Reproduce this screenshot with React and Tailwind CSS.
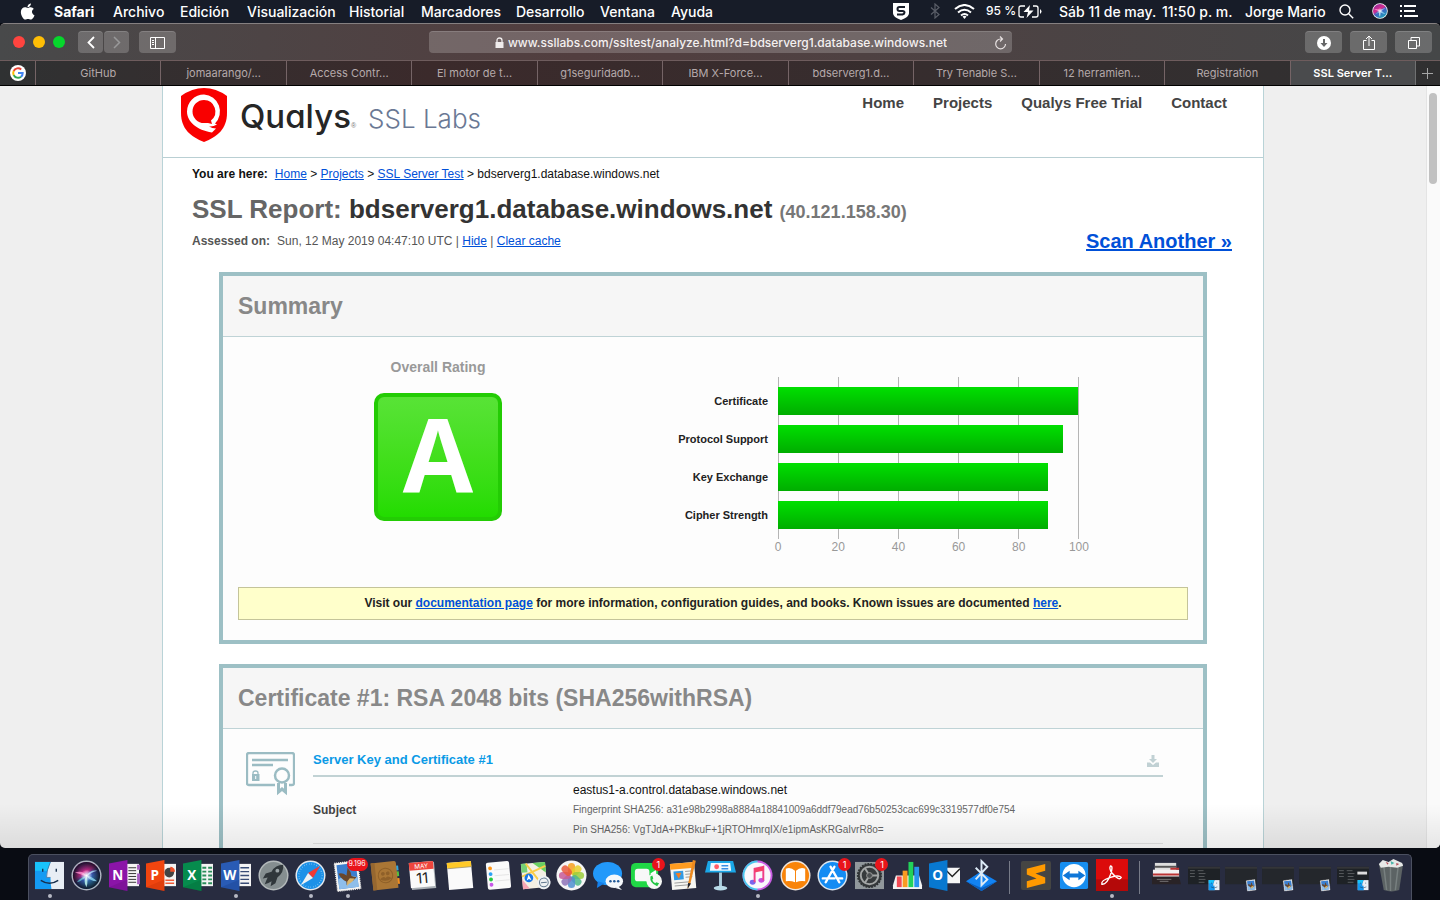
import React from "react";

const menus = [
  ["Archivo", "w-[67px]"],
  ["Edición", "w-[67px]"],
  ["Visualización", "w-[102px]"],
  ["Historial", "w-[72px]"],
  ["Marcadores", "w-[95px]"],
  ["Desarrollo", "w-[84px]"],
  ["Ventana", "w-[71px]"],
  ["Ayuda", "w-[60px]"],
];

const tabs = [
  "GitHub",
  "jomaarango/...",
  "Access Contr...",
  "El motor de t...",
  "g1seguridadb...",
  "IBM X-Force...",
  "bdserverg1.d...",
  "Try Tenable S...",
  "12 herramien...",
  "Registration",
  "SSL Server T...",
];

const ratings = [
  ["Certificate", 100],
  ["Protocol Support", 95],
  ["Key Exchange", 90],
  ["Cipher Strength", 90],
];

function MenuBar() {
  return (
    <header className="flex h-[23px] shrink-0 items-center justify-between bg-[#171c28] pb-[1px] font-['Inter',sans-serif] text-[14px] font-medium whitespace-nowrap text-white">
      <nav className="flex items-center pl-[20px]" aria-label="Menu">
        <svg className="mr-[19px] h-[17px] w-[15px]" viewBox="0 0 384 480" fill="#fff">
          <path d="M319 251c0-37 16-64 50-84-19-27-47-42-85-45-35-3-74 21-88 21-15 0-49-20-76-20C64 124 4 168 4 257c0 27 5 54 15 82 13 38 60 131 110 129 26-1 44-18 78-18 33 0 50 18 79 18 50-1 93-85 105-122-67-32-72-93-72-95zM262 88c28-33 25-64 24-75-24 1-53 17-69 36-18 21-29 46-27 74 27 2 51-11 72-35z" />
        </svg>
        <button className="w-[59px] text-left font-bold">Safari</button>
        {menus.map(([label, width]) => (
          <button key={label} className={`${width} text-left`}>{label}</button>
        ))}
      </nav>
      <div className="flex items-center pr-[22px]">
        <svg className="mr-[21px] h-[17px] w-[16px]" viewBox="0 0 16 17">
          <path d="M0 0h16v10c0 3-3 5-8 7-5-2-8-4-8-7z" fill="#fff" />
          <path d="M12 4H6.500Q4.500 4 4.500 6T6.500 8H9.500Q11.500 8 11.500 9.500T9.500 11.500H4" fill="none" stroke="#171c28" strokeWidth="2" />
        </svg>
        <svg className="mr-[14px] h-[16px] w-[10px]" viewBox="0 0 10 16" fill="none" stroke="#5a5e68" strokeWidth="1.2">
          <path d="M1 4.500 9 11.500 5 15V1l4 3.500-8 7" />
        </svg>
        <svg className="mr-[11px] h-[15px] w-[21px]" viewBox="0 0 21 15" fill="none" stroke="#fff" strokeWidth="2">
          <path d="M1 5Q10.500-3 20 5M4 8.500Q10.500 3 17 8.500M7 11.500Q10.500 8.500 14 11.500" />
          <path d="M8.500 12.500Q10.500 11 12.500 12.500L10.500 15z" fill="#fff" stroke="none" />
        </svg>
        <span className="w-[32px] text-[12px]">95 %</span>
        <svg className="mr-[17px] h-[13px] w-[24px]" viewBox="0 0 24 13" fill="none" stroke="#fff" strokeWidth="1.300">
          <path d="M7 1H3Q1 1 1 3v7q0 2 2 2h3M15 1h3q2 0 2 2v7q0 2-2 2h-4" />
          <path d="M12 0 5.500 7H10L8.500 13 15.500 5.500H11z" fill="#fff" stroke="none" />
          <path d="M22 4Q25 6.500 22 9z" fill="#fff" stroke="none" />
        </svg>
        <time className="flex">
          <span className="w-[103px]">Sáb 11 de may.</span>
          <span className="w-[83px]">11:50 p. m.</span>
        </time>
        <span className="w-[94px]">Jorge Mario</span>
        <svg className="mr-[18px] h-[15px] w-[15px]" viewBox="0 0 15 15" fill="none" stroke="#fff" strokeWidth="1.400">
          <circle cx="6" cy="6" r="5" />
          <path d="m9.700 9.700 4.500 4.500" />
        </svg>
        <SiriOrb className="mr-[12px] h-[16px] w-[16px]" light />
        <svg className="h-[12px] w-[18px]" viewBox="0 0 18 12" fill="#fff">
          <path d="M0 0h2v2H0zM4 0h12v2H4zM0 5h2v2H0zM4 5h11v2H4zM0 10h2v2H0zM4 10h14v2H4z" />
        </svg>
      </div>
    </header>
  );
}

function SiriOrb({ className, light }) {
  return (
    <svg className={className} viewBox="0 0 32 32">
      <defs>
        <linearGradient id="siri" x1="0.2" y1="0" x2=".8" y2="1">
          <stop offset="0" stopColor="#8b2a9c" />
          <stop offset=".38" stopColor="#d82c8e" />
          <stop offset=".55" stopColor="#3c62c4" />
          <stop offset="1" stopColor="#1fa9b4" />
        </linearGradient>
        <radialGradient id="siriShade">
          <stop offset=".3" stopColor="#161325" stopOpacity="0" />
          <stop offset="1" stopColor="#100e20" stopOpacity=".95" />
        </radialGradient>
        <radialGradient id="siriGlow">
          <stop offset="0" stopColor="#ffffff" />
          <stop offset="1" stopColor="#ffffff" stopOpacity="0" />
        </radialGradient>
      </defs>
      <circle cx="16" cy="16" r="15.500" fill={light ? "#fff" : "#aeb3bf"} />
      <circle cx="16" cy="16" r="14" fill="url(#siri)" />
      {!light && <circle cx="16" cy="16" r="14" fill="url(#siriShade)" />}
      <path d="M4 13Q13 10 16 17 11 15 4 13z" fill="#ff8fd0" opacity=".8" />
      <path d="M16 17Q19 10 27 11 20 13 16 17z" fill="#a8e6ff" opacity=".8" />
      <path d="M16 16Q22 17 27 22 19 22 16 16z" fill="#8fd8f4" opacity=".8" />
      <path d="M16 16Q18 22 16 28 12 22 16 16z" fill="#c8fff2" opacity=".8" />
      <path d="M16 16Q13 21 6 23 10 18 16 16z" fill="#69d9d8" opacity=".7" />
      <circle cx="16" cy="16" r="6" fill="url(#siriGlow)" />
    </svg>
  );
}

const toolButton = "flex h-[22px] items-center justify-center rounded-[4px] border-t border-white/15 bg-white/20";

function Toolbar() {
  return (
    <div className="grid h-[36px] grid-cols-[1fr_minmax(0,583px)_1fr] items-center bg-linear-to-r from-[#48494a] via-[#523e3f] via-40% to-[#454748] px-[8px]">
      <div className="flex items-center pl-[5px]">
        <button aria-label="Close" className="mr-[8px] h-[12px] w-[12px] rounded-full bg-[#ff443f]" />
        <button aria-label="Minimize" className="mr-[8px] h-[12px] w-[12px] rounded-full bg-[#ffbe05]" />
        <button aria-label="Full screen" className="mr-[13px] h-[12px] w-[12px] rounded-full bg-[#06d72c]" />
        <button aria-label="Back" className={`${toolButton} mr-[1px] w-[25px]`}>
          <svg className="h-[13px] w-[8px]" viewBox="0 0 8 13" fill="none" stroke="#fff" strokeWidth="1.800"><path d="M7 1 1.500 6.500 7 12" /></svg>
        </button>
        <button aria-label="Forward" className={`${toolButton} mr-[10px] w-[25px]`}>
          <svg className="h-[13px] w-[8px]" viewBox="0 0 8 13" fill="none" stroke="#99999a" strokeWidth="1.500"><path d="M1 1 6.500 6.500 1 12" /></svg>
        </button>
        <button aria-label="Sidebar" className={`${toolButton} w-[37px]`}>
          <svg className="h-[12px] w-[15px]" viewBox="0 0 15 12" fill="none" stroke="#fff"><path d="M.5.5h14v11H.5zM5.500.5v11M2 3.500h2M2 5.500h2M2 7.500h2" /></svg>
        </button>
      </div>
      <div className="flex h-[22px] items-center rounded-[4px] border-t border-white/15 bg-white/20 pl-[20px] pr-[5px]">
        <div className="flex min-w-0 flex-1 items-center justify-center gap-[4px]">
          <svg className="h-[11px] w-[9px] shrink-0" viewBox="0 0 9 11" fill="#f0ecec"><path d="M.5 5h8v6h-8z" /><path d="M2 5.500V3.500Q2 1 4.500 1T7 3.500v2" fill="none" stroke="#f0ecec" strokeWidth="1.300" /></svg>
          <input aria-label="Address" className="[field-sizing:content] min-w-0 bg-transparent font-['Inter',sans-serif] text-[12px] font-medium text-[#f4f0f0] outline-none" defaultValue="www.ssllabs.com/ssltest/analyze.html?d=bdserverg1.database.windows.net" />
        </div>
        <button aria-label="Reload">
          <svg className="h-[14px] w-[13px]" viewBox="0 0 13 14" fill="none" stroke="#e6e0e0" strokeWidth="1.200"><path d="M8 3H6.500A4.900 4.900 0 1 0 11.500 8M6 .5 8.500 3 6 5.500" /></svg>
        </button>
      </div>
      <div className="flex justify-end gap-[8px]">
        <button aria-label="Downloads" className={`${toolButton} w-[37px]`}>
          <svg className="h-[14px] w-[14px]" viewBox="0 0 14 14"><circle cx="7" cy="7" r="7" fill="#fff" /><path d="M6 3h2v4h2.500L7 11 3.500 7H6z" fill="#666768" /></svg>
        </button>
        <button aria-label="Share" className={`${toolButton} w-[37px]`}>
          <svg className="h-[16px] w-[12px]" viewBox="0 0 12 16" fill="none" stroke="#fff"><path d="M3.500 5.500H.5v9h11v-9h-3M6 11V1M3 4l3-3 3 3" /></svg>
        </button>
        <button aria-label="Show tabs" className={`${toolButton} w-[37px]`}>
          <svg className="h-[12px] w-[12px]" viewBox="0 0 12 12" fill="none" stroke="#fff"><path d="M.5 3.500h8v8h-8zM3 3V.5h8.500V9H9" /></svg>
        </button>
      </div>
    </div>
  );
}

function TabStrip() {
  return (
    <div className="flex h-[26px] border-t border-b border-t-[#6e5c5d] border-b-black bg-linear-to-r from-[#2f3132] via-[#3b2a2b] via-30% to-[#303031] font-['Inter',sans-serif] text-[11px]">
      <button aria-label="Google" className="flex w-[35px] items-center justify-center">
        <svg className="h-[16px] w-[16px]" viewBox="0 0 16 16" fill="none" strokeWidth="2">
          <circle cx="8" cy="8" r="8" fill="#fff" />
          <path d="M11.200 4.500A4.800 4.800 0 0 0 3.700 6" stroke="#ea4335" />
          <path d="M3.700 5.900a4.800 4.800 0 0 0 0 4.300" stroke="#fbbc05" />
          <path d="M3.700 10.100a4.800 4.800 0 0 0 7.300 1.600" stroke="#34a853" />
          <path d="M11 11.700A4.600 4.600 0 0 0 12.700 8H8" stroke="#4285f4" />
        </svg>
      </button>
      {tabs.map((tab, index) => (
        <button
          key={tab}
          className={`min-w-0 flex-1 truncate border-l border-[#756466] ${index === tabs.length - 1 ? "bg-[#4a4b4d] font-semibold text-white" : "text-[#b5a9aa]"}`}
        >
          {tab}
        </button>
      ))}
      <button aria-label="New tab" className="flex w-[25px] items-center justify-center border-l border-[#707172]">
        <svg className="h-[11px] w-[11px]" viewBox="0 0 11 11" stroke="#a5a5a6"><path d="M5.500 0v11M0 5.500h11" /></svg>
      </button>
    </div>
  );
}

function SiteHeader() {
  return (
    <header className="flex h-[72px] justify-between border-b border-[#b9cfd3] pl-[18px] pr-[36px]">
      <a href="#home" className="flex pt-[2px]">
        <svg className="h-[54px] w-[46px]" viewBox="0 0 46 54">
          <path d="M0 8Q11 0 23 0T46 8V25C46 41 36 49 23 54 10 49 0 41 0 25z" fill="#f90000" />
          <path d="M23 6.500A17 17 0 0 0 6 23.500C6 34 16 42 31 44.500L35 40.500Q31 40.500 28 38.500 32 39 36 36.500L34 35.500A17 17 0 0 0 23 6.500z" fill="#fff" />
          <path d="M23 12A11.500 11.500 0 0 0 11.500 23.500 11.500 11.500 0 0 0 23 35H27L31 36 30 32.500A11.500 11.500 0 0 0 23 12z" fill="#f90000" />
        </svg>
        <span className="ml-[13px] flex items-baseline">
          <span className="font-['Inter',sans-serif] text-[33px] leading-[56px] font-medium text-[#262626] [font-feature-settings:'cv11']">Qualys</span>
          <span className="text-[7px] text-[#777]">®</span>
          <span className="ml-[12px] font-['Inter',sans-serif] text-[26px] font-light text-[#6a7894]">SSL Labs</span>
        </span>
      </a>
      <nav className="flex gap-[29px] pt-[7px] text-[15px] leading-[20px] font-bold text-[#444]" aria-label="Site">
        <a href="#home">Home</a>
        <a href="#projects">Projects</a>
        <a href="#trial">Qualys Free Trial</a>
        <a href="#contact">Contact</a>
      </nav>
    </header>
  );
}

const link = "text-[#0050d8] underline";

function Card({ title, className, children }) {
  return (
    <section className={`mx-[56px] border-4 border-[#9dc0c5] bg-[#fdfdfd] ${className}`}>
      <h2 className="h-[61px] border-b border-[#bfd3d6] bg-[#f6f6f6] pl-[15px] text-[23px] leading-[60px] font-bold text-[#888]">{title}</h2>
      {children}
    </section>
  );
}

function Summary() {
  return (
    <Card title="Summary" className="mt-[23px]">
      <div className="flex pt-[20px]">
        <div className="flex w-[430px] flex-col items-center">
          <h3 className="text-[14px] leading-[20px] font-bold text-[#999]">Overall Rating</h3>
          <div className="mt-[16px] flex h-[128px] w-[128px] items-start justify-center rounded-[10px] border-4 border-[#23cc04] bg-linear-to-b from-[#58e336] via-[#42df1c] via-50% to-[#22dc00] font-['Open_Sans',sans-serif] text-[102px] leading-[112px] font-bold text-white">
            A
          </div>
        </div>
        <div className="pt-[30px]">
          {ratings.map(([label]) => (
            <div key={label} className="mb-[10px] w-[115px] text-right text-[11px] leading-[28px] font-bold text-[#222]">{label}</div>
          ))}
        </div>
        <div className="ml-[10px] pt-[20px]">
          <div className="relative w-[301px] pt-[10px]">
            <div className="absolute inset-0 grid grid-cols-5 border-r border-[#b5b5b5]">
              {[0, 1, 2, 3, 4].map((n) => <div key={n} className="border-l border-[#b5b5b5]" />)}
            </div>
            <div className="relative mr-[1px] pb-[2px]">
              {ratings.map(([label, value]) => (
                <div key={label} className="mb-[10px] h-[28px] bg-linear-to-b from-[#00e000] to-[#00ad00] last:mb-[8px]" style={{ width: `${value}%` }} />
              ))}
            </div>
          </div>
          <div className="-mx-[30px] grid grid-cols-6 text-center text-[12px] leading-[16px] text-[#999]">
            {[0, 20, 40, 60, 80, 100].map((n) => <span key={n}>{n}</span>)}
          </div>
        </div>
      </div>
      <p className="mx-[15px] mt-[32px] mb-[20px] border border-[#c4c49a] bg-[#ffffcb] text-center text-[12px] leading-[31px] font-bold text-[#222]">
        Visit our <a href="#docs" className={link}>documentation page</a> for more information, configuration guides, and books. Known issues are documented <a href="#issues" className={link}>here</a>.
      </p>
    </Card>
  );
}

function Certificate() {
  return (
    <Card title="Certificate #1: RSA 2048 bits (SHA256withRSA)" className="mt-[20px]">
      <div className="flex pt-[21px] pr-[40px] pb-[40px] pl-[23px]">
        <svg className="mt-[2px] mr-[18px] h-[44px] w-[49px] shrink-0" viewBox="0 0 49 44" fill="none" stroke="#9bbcc3" strokeWidth="2.300">
          <path d="M29 33H3q-2 0-2-2V3q0-2 2-2h43q2 0 2 2v28q0 2-2 2h-3" />
          <path d="M6 8h36M6 13h21" strokeWidth="2.500" />
          <path d="M7 22.500V21q0-2 2.500-2T12 21v1.500" strokeWidth="1.300" />
          <path d="M6 22h7.500v7H6z" fill="#9bbcc3" stroke="none" />
          <path d="M9.700 24v3" stroke="#fff" strokeWidth="1" />
          <circle cx="36" cy="23.500" r="7" strokeWidth="2.500" />
          <path d="M32.500 31v9l3.500-3 3.500 3V31" strokeWidth="3" />
        </svg>
        <div className="min-w-0 flex-1">
          <div className="flex h-[27px] justify-between border-b-2 border-[#c1d2d4] pr-[4px] text-[13px] leading-[20px] font-bold text-[#0a9ae6]">
            <h3>Server Key and Certificate #1</h3>
            <a href="#download" aria-label="Download certificate" className="pt-[5px]">
              <svg className="h-[12px] w-[12px]" viewBox="0 0 12 12" fill="#c1d1d4"><path d="M4.500 0h3v4h2.500L6 8 2 4h2.500zM0 7.500h3L6 10l3-2.500h3V12H0z" /></svg>
            </a>
          </div>
          <table className="mt-[3px] w-full text-left">
            <tbody>
              <tr className="border-b border-[#e3e3e3]">
                <th scope="row" className="w-[260px] pb-[3px] text-[12px] text-[#444]">Subject</th>
                <td className="pb-[3px] text-[10px] leading-[20px] text-[#666]">
                  <div className="text-[12px] text-[#111]">eastus1-a.control.database.windows.net</div>
                  <div>Fingerprint SHA256: a31e98b2998a8884a18841009a6ddf79ead76b50253cac699c3319577df0e754</div>
                  <div>Pin SHA256: VgTJdA+PKBkuF+1jRTOHmrqIX/e1ipmAsKRGaIvrR8o=</div>
                </td>
              </tr>
            </tbody>
          </table>
        </div>
      </div>
    </Card>
  );
}

function Page() {
  return (
    <div className="relative flex min-h-0 flex-1 overflow-hidden rounded-b-[5px] bg-[#efefef] font-['Liberation_Sans',Arial,sans-serif]">
      <div className="min-w-0 flex-1 border-r border-[#e4e4e4]">
        <div className="mx-auto max-w-[1102px] border-x border-[#b9d3d7] bg-white">
          <SiteHeader />
          <main>
            <div className="pr-[31px] pl-[29px]">
              <nav className="pt-[8px] text-[12px] leading-[16px] text-[#111]" aria-label="Breadcrumb">
                <b className="mr-[7px]">You are here:</b>
                <a href="#home" className={link}>Home</a> &gt; <a href="#projects" className={link}>Projects</a> &gt; <a href="#test" className={link}>SSL Server Test</a> &gt; bdserverg1.database.windows.net
              </nav>
              <h1 className="mt-[11px] h-[32px] text-[26px] leading-[32px] font-bold text-[#666]">
                SSL Report: <span className="text-[#333]">bdserverg1.database.windows.net</span> <span className="text-[18px] text-[#777]">(40.121.158.30)</span>
              </h1>
              <div className="flex h-[24px] items-center justify-between pt-[8px] text-[12px] text-[#555]">
                <p><b className="mr-[7px]">Assessed on:</b>Sun, 12 May 2019 04:47:10 UTC | <a href="#hide" className={link}>Hide</a> | <a href="#clear" className={link}>Clear cache</a></p>
                <a href="#scan" className="text-[20px] font-bold text-[#0050d8] underline">Scan Another »</a>
              </div>
            </div>
            <Summary />
            <Certificate />
          </main>
        </div>
      </div>
      <div className="w-[13px] bg-[#fafafa] pt-[7px] pl-[2px]">
        <div className="h-[91px] w-[8px] rounded-full bg-[#c1c1c1]" />
      </div>
      <div className="pointer-events-none absolute inset-x-0 bottom-0 h-[44px] bg-linear-to-b from-transparent to-black/8" />
    </div>
  );
}

function OfficeIcon({ letter, color, dark, children }) {
  return (
    <>
      <path d="M15 4h16v23H15z" fill="#f4f4f4" />
      {children}
      <path d="M0 3.500 19 0v32L0 28z" fill={color} />
      <path d="M0 28 19 20v12z" fill={dark} opacity=".2" />
      <text x="9" y="21" textAnchor="middle" fontFamily="Open Sans" fontWeight="700" fontSize="14" fill="#fff">{letter}</text>
    </>
  );
}

function Stamp() {
  return (
    <g transform="rotate(-7 16 16)">
      <path d="M4 2h24v29H4z" fill="#f4f4f2" stroke="#f4f4f2" strokeDasharray="1 1" strokeWidth="1.500" />
      <path d="M6 4h20v25H6z" fill="#3b7fd0" />
      <path d="M6 19q10-6 20 0v10H6z" fill="#8ebeea" />
      <path d="M7 13q4-1 8 3l2-8q3 4 3 9l5 2-4 3-4 1-3 3v-4q-5-3-7-9z" fill="#69472a" />
      <path d="m18 19 5 1-3 3-4 2-2 2 1-5z" fill="#d9b56a" />
    </g>
  );
}

function FinderFace() {
  return (
    <>
      <path d="M1 2h30v28H1z" fill="#e8eef5" />
      <path d="M1 2h16q-4 8-4 16h4q0 6 1 12H1z" fill="#149bf3" />
      <path d="M1 2h16l-3 9H1z" fill="#18c4fb" />
      <path d="M17 2q-4 8-4 16h4" fill="none" stroke="#3e6a94" strokeWidth=".7" />
      <path d="M9 9v3M23 9v3M7 21q9 6 18 0" fill="none" stroke="#17304e" strokeWidth="1.400" />
    </>
  );
}

const petals = ["#f7a01f", "#e8cf2a", "#9bcc3c", "#4fb88a", "#4f8fd0", "#8e73b8", "#c75a96", "#ea5b3c"];

const dockApps = [
  { name: "Finder", running: true, art: <FinderFace /> },
  { name: "Siri", art: "siri" },
  { name: "OneNote", art: <OfficeIcon letter="N" color="#8b14a8" dark="#4a0860"><path d="M20 8h8M20 11h8M20 14h8M20 17h8M20 20h8M20 23h8" stroke="#333" /><path d="M29 5h3v5h-3zM29 14h3v11h-3z" fill="#a55dc0" /></OfficeIcon> },
  { name: "PowerPoint", art: <OfficeIcon letter="P" color="#f0450f" dark="#a02000"><circle cx="24" cy="13" r="5" fill="#444" /><path d="M25 12V7a5 5 0 0 1 5 5z" fill="#f0502b" /><path d="M20 21h9M20 24h9" stroke="#ef5b38" strokeWidth="1.500" /></OfficeIcon> },
  { name: "Excel", art: <OfficeIcon letter="X" color="#068b4d" dark="#004a25"><path d="M20 8h4M26 8h4M20 12h4M26 12h4M20 16h4M26 16h4M20 20h4M26 20h4M20 24h4M26 24h4" stroke="#2b8d5a" strokeWidth="2" /></OfficeIcon> },
  { name: "Word", running: true, art: <OfficeIcon letter="W" color="#295bb5" dark="#102d70"><path d="M20 8h9M20 12h9M20 16h9M20 20h9M20 24h9" stroke="#394c76" strokeWidth="1.500" /></OfficeIcon> },
  { name: "Launchpad", art: <>
    <circle cx="16" cy="16" r="15.500" fill="#b4babb" /><circle cx="16" cy="16" r="14" fill="#858e90" />
    <path d="M26 5q-8 0-12 7l-6 2-3 5 5-1q-2 4-3 7 4-1 7-3l-1 5 5-3 2-6q7-5 6-13z" fill="#30373b" /><circle cx="20" cy="11" r="2" fill="#9ba4a7" />
  </> },
  { name: "Safari", running: true, art: <>
    <circle cx="16" cy="16" r="15.500" fill="#e4e9ee" /><circle cx="16" cy="16" r="14" fill="#1c91e8" />
    <circle cx="16" cy="16" r="12" fill="none" stroke="#bce3fa" strokeWidth="1.500" strokeDasharray=".4 2.200" />
    <path d="M26 6 18.500 18.500 13.500 13.500z" fill="#f03a35" /><path d="M6 26 13.500 13.500 18.500 18.500z" fill="#eef1f3" />
  </> },
  { name: "Mail", running: true, badge: "9.196", art: <Stamp /> },
  { name: "Contacts", art: <g transform="rotate(-6 16 16)"><path d="M26 7h4v5h-4z" fill="#30a6df" /><path d="M26 13h4v5h-4z" fill="#55c13f" /><path d="M26 20h4v6h-4z" fill="#f28e1f" /><path d="M2 2h24q2 0 2 2v26H2z" fill="#aa7635" /><path d="M2 2h4v28H2z" fill="#966730" /><circle cx="16" cy="16" r="7.500" fill="none" stroke="#8f6029" /><circle cx="13.500" cy="14" r="2" fill="#8f6029" /><circle cx="18.500" cy="14" r="2" fill="#8f6029" /><path d="M10 19.500q3.500-4 6-1 2.500-3 6 1-6 4-12 0z" fill="#8f6029" /></g> },
  { name: "Calendar", art: <g transform="rotate(-5 16 16)"><path d="M4 3h25v27H4z" fill="#aab0b5" /><path d="M3 2h25v26H3z" fill="#fafafa" /><path d="M3 2h25v8H3z" fill="#ee453d" /><text x="15.500" y="8.500" textAnchor="middle" fontFamily="Inter" fontSize="6.500" fill="#fff">MAY</text><text x="15.500" y="24" textAnchor="middle" fontFamily="Inter" fontSize="15" fill="#222">11</text></g> },
  { name: "Notes", art: <g transform="rotate(-5 16 16)"><path d="M4 2h25v28H4z" fill="#fafafa" /><path d="M4 2h25v6H4z" fill="#ffc928" /><path d="M4 8h25" stroke="#8e8a75" strokeWidth=".7" /></g> },
  { name: "Reminders", art: <g transform="rotate(-5 16 16)"><rect x="5" y="2" width="24" height="28" rx="2" fill="#fafafa" /><circle cx="9" cy="8" r="2" fill="#ff9618" /><circle cx="9" cy="14" r="2" fill="#2ba2f5" /><circle cx="9" cy="19.500" r="2" fill="#25c940" /><circle cx="9" cy="25" r="2" fill="#c758e8" /><path d="M13 10h15M13 16h15M13 21.500h15" stroke="#ddd" strokeWidth=".7" /></g> },
  { name: "Maps", art: <g transform="rotate(-5 16 16)"><path d="M3 3h25v26H3z" fill="#f3efe3" /><path d="M15 3h13v11z" fill="#69cf60" /><path d="M3 19 10 29H3z" fill="#f7a5b4" /><path d="M3 3h6v9H3z" fill="#76d276" /><path d="m8 3 17 26M3 16 28 7" stroke="#f9cc48" strokeWidth="2" /><circle cx="10" cy="18" r="4.500" fill="#1777e8" /><path d="m10 14.500 2.500 6-2.500-1.500-2.500 1.500z" fill="#fff" /><circle cx="25" cy="24" r="7" fill="#eef1f3" /><circle cx="25" cy="24" r="4.500" fill="none" stroke="#61788e" /><path d="M22 24h6" stroke="#61788e" /></g> },
  { name: "Photos", art: <><circle cx="16" cy="16" r="15.500" fill="#f5f5f5" />{petals.map((color, index) => <rect key={color} x="12.300" y="3" width="7.400" height="12" rx="3.700" fill={color} opacity=".85" transform={`rotate(${index * 45} 16 16)`} />)}</> },
  { name: "Messages", art: <><ellipse cx="15" cy="14" rx="15" ry="12" fill="#2299fa" /><path d="m5 22-1 7 8-5z" fill="#1680eb" /><ellipse cx="22" cy="22" rx="9" ry="7" fill="#f5f8fb" /><path d="m26 27 4 4-7-2z" fill="#f5f8fb" /><circle cx="18" cy="22" r="1.300" fill="#225a99" /><circle cx="22" cy="22" r="1.300" fill="#225a99" /><circle cx="26" cy="22" r="1.300" fill="#225a99" /></> },
  { name: "FaceTime", badge: "1", art: <><rect x="0" y="3" width="28" height="25" rx="5" fill="#20d746" /><rect x="4" y="9" width="15" height="13" rx="3" fill="#f8f8f8" /><path d="m20 14 6-4v11z" fill="#fff" /><circle cx="24" cy="22" r="8" fill="#f5f8f5" /><path d="M20 17q-1 7 7 10l2-3-3-1-1 1q-3-2-3-4l1-1-1-3z" fill="#22c544" /></> },
  { name: "Pages", art: <g transform="rotate(-5 16 16)"><path d="M3 3h25v27H3z" fill="#f6f6f2" /><path d="M3 3h25v6H3z" fill="#ff9c20" /><path d="M6 11h10v9H6z" fill="#329be5" /><path d="M8 13h6l-3 6z" fill="#f27d24" /><path d="M18 12h7M18 15h7M18 18h7M6 23h15M6 26h15" stroke="#888" strokeWidth=".8" /><path d="m27 1 3 1-8 24-3 4 1-5z" fill="#ed8b20" /><path d="m20 24 3 1-4 5z" fill="#202733" /></g> },
  { name: "Keynote", art: <><path d="M3 1h26l3 12H0z" fill="#1aa7e8" /><path d="M6 3h20l1 8H5z" fill="#f0f9ff" /><circle cx="12" cy="7" r="2.500" fill="#ff5c67" /><path d="M17 6h7M17 9h7" stroke="#398de5" strokeWidth="1.500" /><path d="M14.500 13h3v15h-3z" fill="#aacddd" /><ellipse cx="16" cy="29" rx="7" ry="2.500" fill="#b9dbe9" /></> },
  { name: "iTunes", running: true, art: <><circle cx="16" cy="16" r="15.500" fill="#c95de3" /><path d="M16 .5a15.500 15.500 0 0 0 0 31z" fill="#4bc7ed" /><circle cx="16" cy="16" r="13.500" fill="#faf7fc" /><ellipse cx="11" cy="23" rx="3" ry="2.500" fill="#7a65ed" /><ellipse cx="20" cy="21" rx="3" ry="2.500" fill="#c84ddd" /><path d="M13 23V9l9-2v14" fill="none" stroke="#f03e87" strokeWidth="2" /><path d="m13 9 9-2v4l-9 2z" fill="#f44169" /></> },
  { name: "Books", art: <><circle cx="16" cy="16" r="15.500" fill="#f0e7de" /><circle cx="16" cy="16" r="14" fill="#f98409" /><path d="M15.500 11Q11 7 6 9v13q5-1 9.500 1zM16.500 11Q21 7 26 9v13q-5-1-9.500 1z" fill="#fff" /></> },
  { name: "App Store", badge: "1", art: <><circle cx="16" cy="16" r="15.500" fill="#dce6ef" /><circle cx="16" cy="16" r="14" fill="#148cf3" /><path d="m18 7-9 16M14 7l9 16M6 19h12M21 19h5" stroke="#fff" strokeWidth="2.500" strokeLinecap="round" /></> },
  { name: "System Preferences", badge: "1", art: <><path d="M1 2h30v28H1z" fill="#91989c" /><circle cx="16" cy="16" r="12" fill="#373b3d" stroke="#2f3335" strokeWidth="2" strokeDasharray="2 1" /><circle cx="16" cy="16" r="9" fill="none" stroke="#a3a6a6" strokeWidth="2" /><path d="M16 16 11 8M16 16l-5 8M16 16h9" stroke="#a3a6a6" strokeWidth="2" /><circle cx="16" cy="16" r="3" fill="#4c5052" stroke="#999" /></> },
  { name: "Numbers", art: <><path d="M1 26 4 16h24l3 10v4H1z" fill="#f3f3f3" /><path d="M5 17h5v11H5z" fill="#f34b55" /><path d="M11 11h5v17h-5z" fill="#f99b22" /><path d="M17 2h5v26h-5z" fill="#22d25a" /><path d="M23 7h5v21h-5z" fill="#2894ef" /></> },
  { name: "Outlook", art: <><path d="M15 8h17v16H15z" fill="#f6f6f6" /><path d="m17 10 7 7 8-8" fill="none" stroke="#222" strokeWidth="1.500" /><path d="M0 3.500 19 0v32L0 28z" fill="#0878d0" /><text x="9" y="21" textAnchor="middle" fontFamily="Open Sans" fontWeight="700" fontSize="14" fill="#fff">O</text></> },
  { name: "Bluetooth File Exchange", art: <><path d="m0 22 15-10 17 10-16 10z" fill="#1283f3" /><path d="m0 22 16 7 16-7-16 10z" fill="#0a5fbf" /><path d="m10 8 12 12-6 6V1l6 6-12 13" fill="none" stroke="#dceaf6" strokeWidth="2" /></> },
  null,
  { name: "Sublime Text", art: <><rect x="0" y="1" width="31" height="30" rx="2" fill="#454543" /><path d="M25 4v7l-10 3 10 4v6L6 29v-7l10-3-10-4V9z" fill="#ff9a00" /></> },
  { name: "TeamViewer", art: <><rect x="1" y="2" width="29" height="28" rx="2" fill="#178ef0" /><circle cx="15.500" cy="16" r="12" fill="#fff" /><path d="m4 16 7-5v3h9v-3l7 5-7 5v-3h-9v3z" fill="#0f76d8" /></> },
  { name: "Acrobat Reader", running: true, art: <><path d="M0-1h33v33H0z" fill="#dc0b0b" /><path d="M0 20h33v12H0z" fill="#b40909" /><path d="M6 25q-1-4 9-7 9-3 11 0-2 4-9-4-4-5-2-8 3 0 0 9-4 11-9 10z" fill="none" stroke="#fff" strokeWidth="1.400" /></> },
  null,
  { name: "Downloads", art: <><path d="M4 3h22v14H4z" fill="#ddd" /><path d="M4 6h22v2H4z" fill="#555" /><path d="M2 10h27v12H2z" fill="#f4f2f2" /><path d="M2 14h27v2H2zM20 8h9v2h-9z" fill="#bb3434" /><path d="M1 17h28l2 8H1z" fill="#292326" /><path d="M6 20h15M9 22h9" stroke="#999" strokeWidth=".7" /></> },
  { name: "Finder window", art: "finderWindow" },
  { name: "Mail window 1", art: "mailWindow" },
  { name: "Mail window 2", art: "mailWindow" },
  { name: "Mail window 3", art: "mailWindow" },
  { name: "Finder window 2", art: "finderWindow2" },
  { name: "Trash", art: <><path d="M4 4h25l-4 27q-8 3-16 0z" fill="#5c6364" /><path d="m9 6 3 25M16 6v26M24 6l-3 25" stroke="#788080" strokeWidth="1.500" /><path d="m4 4 4-4 6 2 5-3 9 4 1 3-6 2-9-1-8 1z" fill="#e6e8e7" /><path d="m11 2 3 1-1 2zM22 3l3 1-3 2z" fill="#b44b55" /><path d="m16 1 4 2-3 2z" fill="#49b5a9" /></> },
];

function WindowThumb({ kind }) {
  const finder = kind !== "mailWindow";
  return (
    <>
      <path d="M-1 7h33v18H-1z" fill={finder ? "#1e2226" : "#24272c"} />
      <path d="M-1 7h33v2H-1z" fill="#343538" />
      {finder && <path d="M1 11h5M1 14h5M1 17h5M9 11h6M10 14h7M10 17h6M10 20h7M10 23h6" stroke="#686b6e" strokeWidth=".8" />}
      {kind === "finderWindow2" && <path d="M20 12h10v3H20z" fill="#ddd" />}
      <g transform="translate(20 20) scale(.37)">{finder ? <FinderFace /> : <Stamp />}</g>
    </>
  );
}

function Dock() {
  return (
    <footer className="h-[52px] shrink-0 bg-[#090c13] px-[28px] pt-[6px]">
      <div className="flex h-[46px] rounded-t-[5px] border border-b-0 border-[#4b5060] bg-[#282c40] pr-[2px] pl-[2px]">
        {dockApps.map((app, index) =>
          app === null ? (
            <div key={index} className="flex w-[18px] justify-center pt-[6px]"><div className="h-[33px] w-[1px] bg-[#777b88]" /></div>
          ) : (
            <button key={app.name} aria-label={app.name} className="relative flex min-w-0 flex-1 flex-col items-center pt-[5px]">
              {app.art === "siri" ? (
                <SiriOrb className="h-[31px] w-[31px]" />
              ) : (
                <svg className="h-[31px] w-[31px] overflow-visible" viewBox="0 0 32 32">
                  {typeof app.art === "string" ? <WindowThumb kind={app.art} /> : app.art}
                </svg>
              )}
              {app.running && <span className="mt-[3px] h-[4px] w-[4px] rounded-full bg-[#b6b9c3]" />}
              {app.badge && (
                <span className={`absolute top-[3px] flex h-[13px] items-center justify-center rounded-full bg-[#e9141b] font-['Inter',sans-serif] text-white ${app.badge === "1" ? "right-[0px] w-[13px] text-[9px]" : "-right-[1px] w-[21px] text-[7px]"}`}>{app.badge}</span>
              )}
            </button>
          )
        )}
      </div>
    </footer>
  );
}

export default function App() {
  return (
    <div className="flex h-screen flex-col overflow-hidden bg-[#090c13]">
      <MenuBar />
      <div className="flex min-h-0 flex-1 flex-col overflow-hidden rounded-t-[5px] border-t border-[#858081] bg-[#4b4445]">
        <Toolbar />
        <TabStrip />
        <div className="flex min-h-0 flex-1 flex-col bg-[#090c13]">
          <Page />
        </div>
      </div>
      <Dock />
    </div>
  );
}
